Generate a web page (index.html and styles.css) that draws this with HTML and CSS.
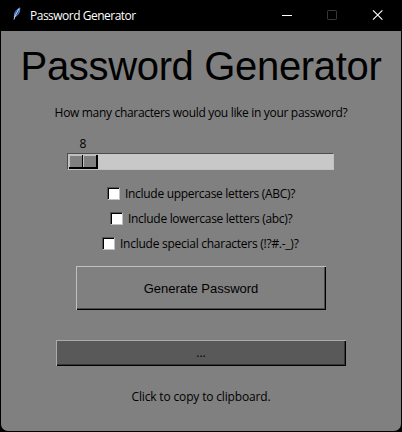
FILE: index.html
```html
<!DOCTYPE html>
<html lang="en">
<head>
<meta charset="utf-8">
<title>Password Generator</title>
<link rel="stylesheet" href="styles.css">
</head>
<body>
<div class="window">
  <header class="titlebar">
    <svg class="feather" width="8" height="14" viewBox="0 0 8 14"><path d="M1.4 10C1.2 6 2.8 3 6.8.9 7 5.3 5 8.2 2.3 9.6Z" fill="#16489d" stroke="#71a4e9" stroke-width=".9"/><path d="M1 12.5 2 9 5.8 2" fill="none" stroke="#d9ebff" stroke-width=".9"/></svg>
    <span class="caption">Password Generator</span>
    <svg class="controls" width="102" height="12" viewBox="0 0 102 12" fill="none"><path d="M0 6.5H10" stroke="#fff"/><rect x="45.5" y="1.5" width="9" height="9" rx=".7" stroke="#373737"/><path d="M91 1.3 100.4 10.7M100.4 1.3 91 10.7" stroke="#fff" stroke-width="1.1"/></svg>
  </header>
  <main class="content">
    <h1 class="title">Password Generator</h1>
    <p class="question">How many characters would you like in your password?</p>
    <div class="scale">
      <span class="value">8</span>
      <div class="trough"><div class="thumb"><i></i><i></i></div></div>
    </div>
    <div class="options">
      <label class="option upper"><span class="box"></span><span class="text">Include uppercase letters (ABC)?</span></label>
      <label class="option lower"><span class="box"></span><span class="text">Include lowercase letters (abc)?</span></label>
      <label class="option special"><span class="box"></span><span class="text">Include special characters (!?#.-_)?</span></label>
    </div>
    <button class="generate">Generate Password</button>
    <button class="result">...</button>
    <p class="hint">Click to copy to clipboard.</p>
  </main>
</div>
</body>
</html>
```
FILE: styles.css
```css
* { box-sizing: border-box; }
body { margin: 0; background: #000; font: 12px/16px "Open Sans", "Noto Sans", sans-serif; color: #000; }
.window { width: 402px; height: 432px; padding: 0 1px 1px; background: #000; overflow: hidden; }
.titlebar { height: 31px; display: flex; align-items: center; padding-left: 12px; color: #fff; }
.feather { flex: none; margin-top: -4px; }
.caption { width: 243px; margin-left: 9px; white-space: nowrap; letter-spacing: -.5px; }
.controls { flex: none; margin-left: 9px; margin-top: -1px; }
.content { height: 400px; background: #808080; border-radius: 0 0 7px 7px; display: flex; flex-direction: column; align-items: center; }
.title { margin: 12px 0 0; font: 40px/46px "Liberation Sans", Arial, sans-serif; white-space: nowrap; letter-spacing: -.33px; }
.question { margin: 16px 0 0; white-space: nowrap; letter-spacing: -.32px; }
.scale { width: 267px; margin-top: 15px; margin-right: 1px; }
.value { display: block; width: 32px; height: 17px; text-align: center; }
.trough { height: 17px; background: #c8c8c8; border: 1px solid; border-color: #4d4d4d #c0c0c0 #c0c0c0 #4d4d4d; }
.thumb { width: 30px; height: 15px; background: #000; border-top: 1px solid #c0c0c0; border-left: 1px solid #c0c0c0; padding: 0 1px 2px 0; display: flex; gap: 1px; }
.thumb i { width: 13px; background: #808080; border-top: 1px solid #c0c0c0; border-left: 1px solid #c0c0c0; }
.options { align-self: stretch; margin-top: 15px; display: flex; flex-direction: column; gap: 9px; }
.option { height: 16px; display: flex; align-items: center; gap: 5px; }
.upper { margin-left: 106px; }
.lower { margin-left: 109px; }
.special { margin-left: 101px; }
.box { width: 13px; height: 13px; background: #fff; border: 1px solid; border-color: #555 #c0c0c0 #c0c0c0 #555; box-shadow: inset 1px 1px #000; }
.text { white-space: nowrap; letter-spacing: -.3px; padding-top: 2px; }
.special .text { letter-spacing: -.26px; }
button { padding: 0; border: 0; border-radius: 0; color: #000; }
.generate { width: 250px; height: 44px; margin-top: 15px; padding-top: 2px; background: #808080; box-shadow: inset 1px 1px #c0c0c0, inset -1px -1px #000, inset -2px -2px #4d4d4d; font: 13px/16px "Liberation Sans", Arial, sans-serif; letter-spacing: -.02px; }
.result { width: 290px; height: 26px; margin-top: 30px; background: #595959; box-shadow: inset 1px 1px #ababab, inset -1px -1px #000, inset -2px -2px #363636; font: 12px/16px "Open Sans", sans-serif; }
.hint { margin: 23px 0 0; letter-spacing: -.16px; white-space: nowrap; }
```
